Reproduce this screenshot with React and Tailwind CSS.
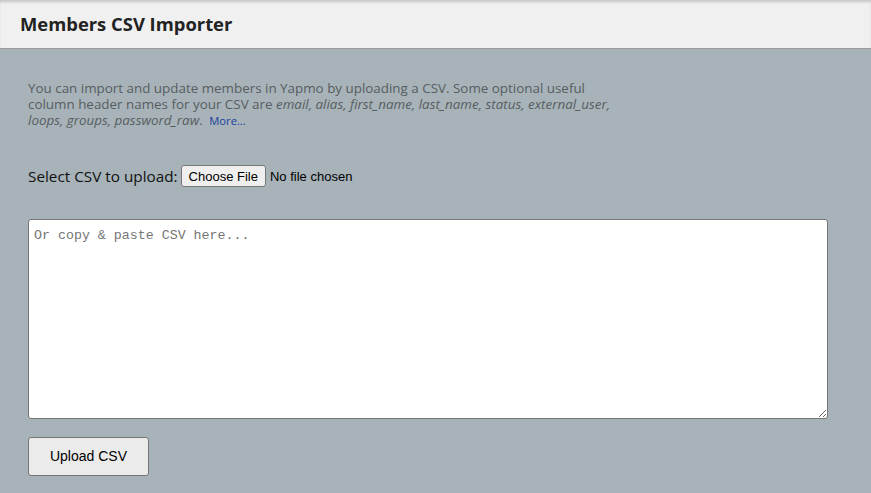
export default function App() {
  return (
    <div className="min-h-screen bg-[#a7b3b9] font-['Open_Sans',sans-serif]">
      {/* Header */}
      <header className="h-[49px] bg-[#f0f0f0] border-b border-[#9a9a9a] shadow-[inset_0_3px_3px_-1px_rgba(0,0,0,0.18)] flex items-center px-5">
        <h1 className="text-[18.4px] font-bold text-[#222]">Members CSV Importer</h1>
      </header>

      <main className="px-7 pt-[31px]">
        <p className="text-[13.4px] leading-4 text-[#585d60] max-w-[600px]">
          You can import and update members in Yapmo by uploading a CSV. Some optional useful
          column header names for your CSV are <i>email, alias, first_name, last_name, status, external_user,</i>{" "}
          <i>loops, groups, password_raw</i>.{" "}
          <a href="#" className="ml-[3px] text-[11.2px] text-[#1a3fa0]">More...</a>
        </p>

        <div className="mt-[36px] flex items-center gap-[3px]">
          <span className="text-[15.3px] text-[#111]">Select CSV to upload:</span>
          <button className="h-[22px] px-[7px] bg-[#efefef] border border-[#767676] rounded-[3px] text-[13px] text-black font-['Liberation_Sans',Arial,sans-serif]">
            Choose File
          </button>
          <span className="ml-[1px] text-[13px] text-black font-['Liberation_Sans',Arial,sans-serif]">No file chosen</span>
        </div>

        <textarea
          placeholder="Or copy & paste CSV here..."
          className="mt-[31px] block w-[800px] h-[200px] bg-white border border-[#767676] rounded-[3px] px-[5px] py-[6px] text-[13.3px] font-['Liberation_Mono',monospace] placeholder:text-[#757575] outline-none"
        />

        <button className="mt-[18px] w-[121px] h-[39px] bg-[#ebebeb] border border-[#767676] rounded-[3px] text-[14px] text-black font-['Liberation_Sans',Arial,sans-serif]">
          Upload CSV
        </button>
      </main>
    </div>
  );
}
